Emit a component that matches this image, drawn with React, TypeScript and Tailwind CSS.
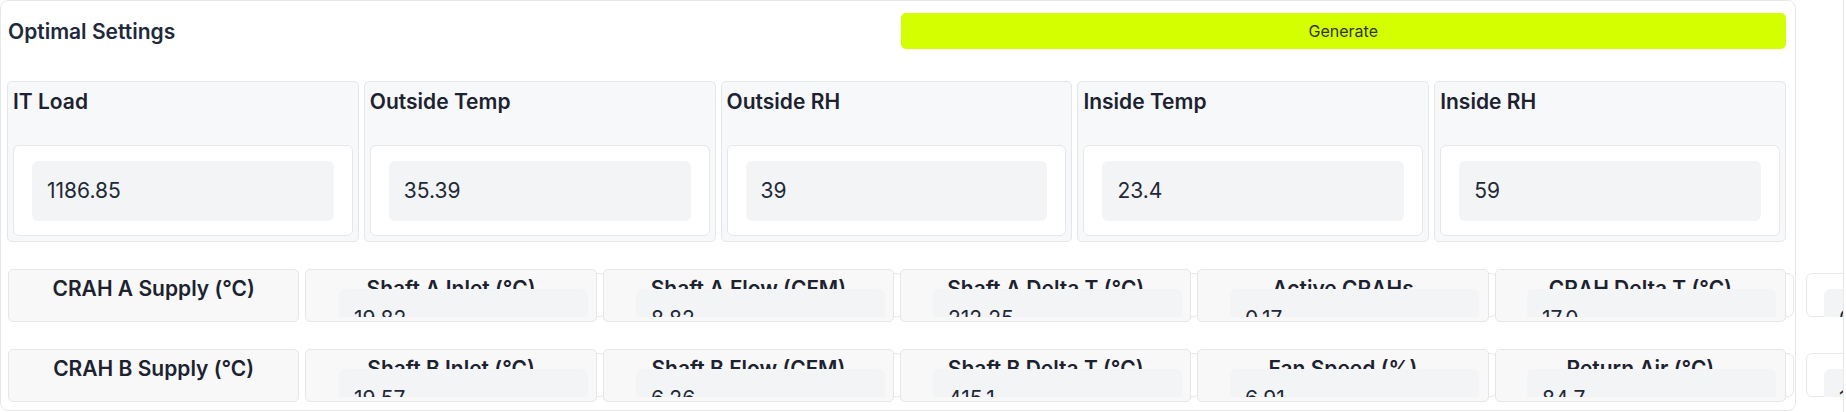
const inputs = [
  { label: 'IT Load', value: '1186.85' },
  { label: 'Outside Temp', value: '35.39' },
  { label: 'Outside RH', value: '39' },
  { label: 'Inside Temp', value: '23.4' },
  { label: 'Inside RH', value: '59' },
];

const rows = [
  {
    labels: ['CRAH A Supply (°C)', 'Shaft A Inlet (°C)', 'Shaft A Flow (CFM)', 'Shaft A Delta T (°C)', 'Active CRAHs', 'CRAH Delta T (°C)'],
    values: ['19.82', '8.82', '212.25', '0.17', '17.0', '0.64'],
  },
  {
    labels: ['CRAH B Supply (°C)', 'Shaft B Inlet (°C)', 'Shaft B Flow (CFM)', 'Shaft B Delta T (°C)', 'Fan Speed (%)', 'Return Air (°C)'],
    values: ['19.57', '6.26', '415.1', '6.91', '84.7', '1.12'],
  },
];

function ResultRow({ labels, values }: { labels: string[]; values: string[] }) {
  return (
    <div className="grid h-[53px] grid-cols-1">
      {/* value cells sit behind the label cards */}
      <div className="col-start-1 row-start-1 flex gap-[12px] pl-[314px] pt-[4px]">
        {values.map((v) => (
          <div key={v} className="h-[44px] w-[285px] shrink-0 rounded-md border border-[#e5e7eb] bg-white" />
        ))}
      </div>

      <div className="col-start-1 row-start-1 grid grid-cols-6 gap-[6px] pl-[1px]">
        {labels.map((l) => (
          <div key={l} className="h-[53px] rounded-[5px] border border-[#e6e6e6] bg-[#f8f8f8] pt-[5px] text-center">
            <h4 className="text-[21px] leading-7 font-semibold text-[#1c2230]">{l}</h4>
          </div>
        ))}
      </div>

      {/* inputs overflow the cell and get cut off */}
      <div className="col-start-1 row-start-1 flex gap-[12px] pl-[314px] pt-[4px]">
        {values.map((v) => (
          <div key={v} className="h-[44px] w-[285px] shrink-0 overflow-hidden px-[18px] pt-[16px]">
            <div className="flex h-[60px] items-center rounded-md bg-[#f3f4f6] px-[15px] text-[21px] text-[#1f2937]">{v}</div>
          </div>
        ))}
      </div>
    </div>
  );
}

export default function App() {
  return (
    <div className="flex h-[412px] w-[1846px] bg-white" style={{ fontFamily: 'Inter, "Noto Sans", sans-serif' }}>
      <div className="h-[412px] w-[1844px] shrink-0 overflow-hidden border-r border-[#e5e7eb]">
        <div className="h-[411px] w-[1796px] rounded-lg border border-[#e5e7eb] pt-[12px] pr-[9px] pl-[6px]">
          <div className="grid grid-cols-2 items-center gap-2">
            <h3 className="pt-[2px] pl-[1px] text-[21px] font-semibold text-[#1e293b]">Optimal Settings</h3>
            <button className="h-9 rounded-[5px] bg-[#d4ff00] text-base text-[#333333]">Generate</button>
          </div>

          <div className="mt-[32px] grid grid-cols-5 gap-[5px]">
            {inputs.map((i) => (
              <div key={i.label} className="flex h-[161px] flex-col justify-between rounded-[5px] border border-[#e4e6ea] bg-[#f7f8fa] p-[5px]">
                <h4 className="pt-[1px] text-[21px] leading-7 font-semibold text-[#1c2230]">{i.label}</h4>
                <div className="rounded-md border border-[#e5e7eb] bg-white px-[18px] pt-[15px] pb-[14px]">
                  <div className="flex h-[60px] items-center rounded-md bg-[#f3f4f6] px-[15px] text-[21px] text-[#1f2937]">{i.value}</div>
                </div>
              </div>
            ))}
          </div>

          <div className="mt-[27px] flex flex-col gap-[27px]">
            {rows.map((r) => (
              <ResultRow key={r.labels[0]} labels={r.labels} values={r.values} />
            ))}
          </div>
        </div>
      </div>
    </div>
  );
}
